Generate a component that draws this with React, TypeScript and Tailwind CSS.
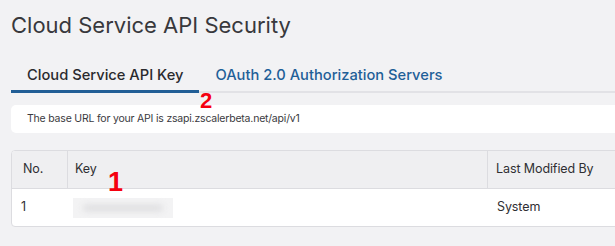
export default function App() {
  return (
    <div className="relative w-[615px] h-[246px] overflow-hidden bg-[#f2f2f4] font-['Inter','Liberation_Sans',sans-serif] text-[#2f2f33]">
      <div className="w-[680px] pl-[11px]">
        <h1 className="pt-[11px] text-[22px] leading-[28px] font-normal text-[#38383c]">
          Cloud Service API Security
        </h1>

        {/* Tabs */}
        <div className="mt-[23px] flex items-end border-b-2 border-[#e2e2e6]">
          <div className="-mb-[2px] px-4 pt-[3px] pb-[5px] border-b-[3px] border-[#215e96] text-[14.7px] leading-[20px] font-medium text-[#2a2a2e]">
            Cloud Service API Key
          </div>
          <div className="-mb-[2px] px-4 pt-[3px] pb-[5px] border-b-[3px] border-transparent text-[14.7px] leading-[20px] font-medium text-[#1f6098]">
            OAuth 2.0 Authorization Servers
          </div>
        </div>

        {/* Base URL */}
        <div className="mt-[12px] h-[28px] flex items-center rounded-[5px] bg-white pl-4 text-[10.5px] tracking-[-0.2px] text-[#3a3a3e]">
          The base URL for your API is zsapi.zscalerbeta.net/api/v1
        </div>

        {/* Table */}
        <div className="mt-[17px] rounded-[4px] border border-[#dcdce0] bg-white overflow-hidden text-[12.5px] tracking-[-0.1px]">
          <div className="flex h-[38px] bg-[#efeff1] border-b border-[#dcdce0]">
            <div className="w-[56px] flex items-center pl-[11px] border-r border-[#dcdce0]">No.</div>
            <div className="w-[420px] flex items-center pl-[7px] border-r border-[#dcdce0]">Key</div>
            <div className="flex-1 flex items-center pl-2">Last Modified By</div>
          </div>
          <div className="flex h-[37px]">
            <div className="w-[56px] flex items-center pl-[9px]">1</div>
            <div className="w-[420px] flex items-center pl-[5px]">
              <div className="w-[100px] h-[20px] bg-[#f3f3f4] flex items-center justify-center">
                <div className="w-[80px] h-[6px] rounded-full bg-[#dcdcde] blur-[3px]" />
              </div>
            </div>
            <div className="flex-1 flex items-center pl-[9px]">System</div>
          </div>
        </div>
      </div>

      {/* Annotation markers */}
      <span className="absolute left-[200px] top-[88px] text-[22px] leading-[26px] font-bold text-[#f5000f] font-['Liberation_Sans',sans-serif]">
        2
      </span>
      <span className="absolute left-[108px] top-[166px] text-[27px] leading-[32px] font-bold text-[#f5000f] font-['Liberation_Sans',sans-serif]">
        1
      </span>
    </div>
  );
}
